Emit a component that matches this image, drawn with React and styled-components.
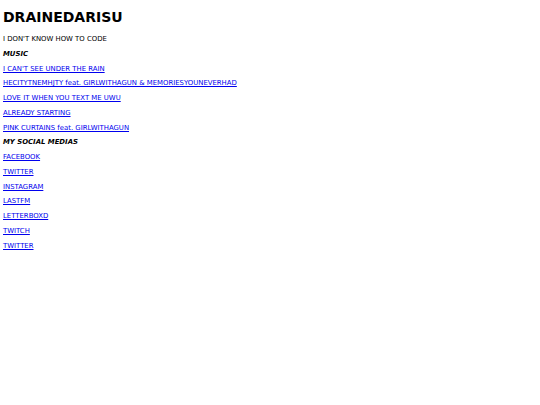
import styled, { createGlobalStyle } from "styled-components";

const GlobalStyle = createGlobalStyle`
  html, body {
    margin: 0;
    padding: 0;
    background: #fff;
  }
  body {
    font-family: "DejaVu Sans", Verdana, sans-serif;
    font-size: 6.9px;
    color: #000;
  }
`;

const Page = styled.main`
  padding: 0 3px;
`;

const Title = styled.h1`
  font-size: 14px;
  font-weight: bold;
  margin: 9px 0 10px;
  line-height: 16px;
`;

const Line = styled.p`
  margin: 6.75px 0;
  line-height: 8px;
`;

const Heading = styled(Line)`
  font-weight: bold;
  font-style: italic;
`;

const Link = styled.a`
  color: #0000ee;
  text-decoration: underline;
`;

const music = [
  "I CAN'T SEE UNDER THE RAIN",
  "HECITYTNEMHJTY feat. GIRLWITHAGUN & MEMORIESYOUNEVERHAD",
  "LOVE IT WHEN YOU TEXT ME UWU",
  "ALREADY STARTING",
  "PINK CURTAINS feat. GIRLWITHAGUN",
];

const socials = [
  "FACEBOOK",
  "TWITTER",
  "INSTAGRAM",
  "LASTFM",
  "LETTERBOXD",
  "TWITCH",
  "TWITTER",
];

const App = () => {
  return (
    <>
      <GlobalStyle />
      <Page>
        <Title>DRAINEDARISU</Title>
        <Line>I DON'T KNOW HOW TO CODE</Line>
        <Heading>MUSIC</Heading>
        {music.map((song, i) => (
          <Line key={"m" + i}>
            <Link href="#">{song}</Link>
          </Line>
        ))}
        <Heading>MY SOCIAL MEDIAS</Heading>
        {socials.map((name, i) => (
          <Line key={"s" + i}>
            <Link href="#">{name}</Link>
          </Line>
        ))}
      </Page>
    </>
  );
};

export default App;
